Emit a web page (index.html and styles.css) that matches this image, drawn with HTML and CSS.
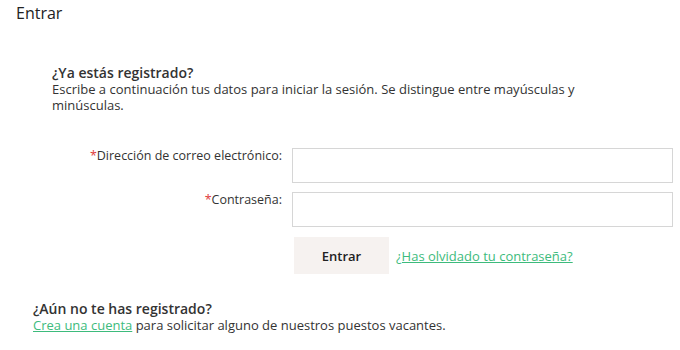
FILE: index.html
```html
<!DOCTYPE html>
<html lang="es">
<head>
<meta charset="utf-8">
<title>Entrar</title>
<link rel="stylesheet" href="styles.css">
</head>
<body>
<div class="page">
  <h1 class="title">Entrar</h1>
  <section class="login">
    <h2 class="subtitle">¿Ya estás registrado?</h2>
    <p class="intro">Escribe a continuación tus datos para iniciar la sesión. Se distingue entre mayúsculas y minúsculas.</p>
    <form class="form">
      <div class="row">
        <label class="label" for="email"><span class="req">*</span>Dirección de correo electrónico:</label>
        <input class="input" id="email" type="text">
      </div>
      <div class="row">
        <label class="label" for="pass"><span class="req">*</span>Contraseña:</label>
        <input class="input" id="pass" type="password">
      </div>
      <div class="row actions">
        <span class="label"></span>
        <button class="btn" type="button">Entrar</button>
        <a class="link forgot" href="#">¿Has olvidado tu contraseña?</a>
      </div>
    </form>
  </section>
  <section class="register">
    <h2 class="subtitle">¿Aún no te has registrado?</h2>
    <p class="intro"><a class="link" href="#">Crea una cuenta</a> para solicitar alguno de nuestros puestos vacantes.</p>
  </section>
</div>
</body>
</html>
```
FILE: styles.css
```css
* { box-sizing: border-box; }
html, body { margin: 0; padding: 0; background: #fff; }
body {
  font-family: "Open Sans", "Liberation Sans", sans-serif;
  color: #333;
  font-size: 13px;
}
.page { padding: 2px 16px 0 16px; }
.title {
  margin: 0;
  font-size: 16px;
  font-weight: 400;
  line-height: 22px;
  color: #222;
}
.login { padding: 40px 0 0 36px; }
.subtitle {
  margin: 0;
  font-size: 14px;
  font-weight: 600;
  line-height: 17px;
  color: #333;
}
.intro { margin: 0; line-height: 16px; }
.login .intro { max-width: 560px; }
.form { display: flex; flex-direction: column; gap: 9px; margin-top: 35px; margin-left: -52px; }
.row { display: flex; align-items: flex-start; }
.label {
  width: 282px;
  flex: none;
  text-align: right;
  padding: 0;
  font-size: 12.5px;
  line-height: 16px;
}
.req { color: #e03a3a; }
.input {
  flex: none;
  width: 381px;
  height: 35px;
  border: 1px solid #d6d6d6;
  background: #fff;
  margin: 0 0 0 10px;
  font: inherit;
}
.actions { align-items: center; margin-top: 1px; }
.btn {
  flex: none;
  margin-left: 12px;
  width: 95px;
  height: 37px;
  border: 0;
  background: #f6f2f0;
  font-family: inherit;
  font-size: 13px;
  font-weight: 600;
  color: #222;
  cursor: pointer;
}
.link { color: #3dbb7c; text-decoration: underline; }
.forgot { margin-left: 7px; }
.register { padding: 26px 0 0 17px; }
```
